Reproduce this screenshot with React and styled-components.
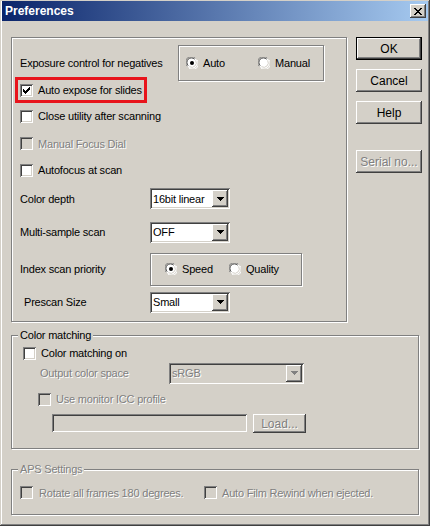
import React from 'react'
import styled, { createGlobalStyle } from 'styled-components'

const Global = createGlobalStyle`
  body {
    margin: 0;
    background: #d4d0c8;
  }
`

const raised = `
  background: #d4d0c8;
  box-shadow: inset -1px -1px #404040, inset 1px 1px #fff, inset -2px -2px #808080, inset 2px 2px #d4d0c8;
`

const sunken = `
  box-shadow: inset 1px 1px #808080, inset -1px -1px #fff, inset 2px 2px #404040, inset -2px -2px #d4d0c8;
`

const Window = styled.div`
  width: 430px;
  height: 526px;
  box-sizing: border-box;
  padding: 1px 2px 0;
  background: #d4d0c8;
  box-shadow: inset -1px -1px #404040, inset 1px 1px #d4d0c8, inset -2px -2px #808080, inset 2px 2px #fff;
  display: flex;
  flex-direction: column;
  font-family: "Liberation Sans", Arial, sans-serif;
  font-size: 11px;
  letter-spacing: -0.2px;
  color: #000;
`

const TitleBar = styled.div`
  height: 20px;
  display: flex;
  align-items: center;
  justify-content: space-between;
  padding: 0 2px 0 3px;
  background: linear-gradient(to right, #0a246a, #a6caf0);
`

const Title = styled.span`
  color: #fff;
  font-weight: bold;
  font-size: 12px;
  letter-spacing: 0;
`

const CloseButton = styled.div`
  width: 16px;
  height: 14px;
  ${raised}
  display: flex;
  align-items: center;
  justify-content: center;
`

const Content = styled.div`
  padding: 16px 0 0 9px;
  display: flex;
  flex-direction: column;
`

const TopRow = styled.div`
  display: flex;
  gap: 9px;
`

const etched = `
  border: 1px solid #808080;
  box-shadow: inset 1px 1px #fff, 1px 1px #fff;
`

const Panel = styled.div`
  ${etched}
  box-sizing: border-box;
  width: 336px;
  height: 285px;
  padding: 7px 0 0 8px;
  display: flex;
  flex-direction: column;
`

const Row = styled.div`
  display: flex;
  align-items: ${p => (p.$top ? 'flex-start' : 'center')};
  height: ${p => p.$h}px;
  margin-top: ${p => p.$mt || 0}px;
  padding-left: ${p => p.$pl || 0}px;
  box-sizing: border-box;
`

const Label = styled.span`
  width: ${p => (p.$w ? `${p.$w}px` : 'auto')};
  padding-left: ${p => p.$pl || 0}px;
  box-sizing: border-box;
  white-space: nowrap;
  color: ${p => (p.$disabled ? '#808080' : '#000')};
  text-shadow: ${p => (p.$disabled ? '1px 1px #fff' : 'none')};
`

const Highlight = styled.div`
  display: flex;
  align-items: center;
  box-sizing: border-box;
  width: 132px;
  height: 26px;
  margin-left: -5px;
  padding-left: 2px;
  border: 3px solid #e8141c;
`

const Option = styled.label`
  display: flex;
  align-items: center;
  gap: ${p => p.$gap || 5}px;
  width: ${p => (p.$w ? `${p.$w}px` : 'auto')};
  flex-shrink: 0;
`

const Box = styled.span`
  width: 13px;
  height: 13px;
  flex-shrink: 0;
  background: ${p => (p.$disabled ? '#d4d0c8' : '#fff')};
  ${sunken}
  display: flex;
  align-items: center;
  justify-content: center;
`

const RadioGroup = styled.div`
  ${etched}
  box-sizing: border-box;
  width: ${p => p.$w}px;
  height: ${p => p.$h}px;
  display: flex;
  align-items: center;
  padding-left: ${p => p.$pl}px;
`

const RadioCircle = styled.span`
  width: 12px;
  height: 12px;
  flex-shrink: 0;
  display: block;
`

const Combo = styled.div`
  width: ${p => p.$w}px;
  height: 21px;
  box-sizing: border-box;
  background: ${p => (p.$disabled ? '#d4d0c8' : '#fff')};
  ${sunken}
  display: flex;
  align-items: center;
  justify-content: space-between;
  padding: 2px 2px 2px 3px;
  color: ${p => (p.$disabled ? '#808080' : '#000')};
`

const ComboButton = styled.span`
  width: 16px;
  height: 17px;
  ${raised}
  display: flex;
  align-items: center;
  justify-content: center;
`

const ButtonColumn = styled.div`
  width: 66px;
  display: flex;
  flex-direction: column;
`

const Button = styled.div`
  width: ${p => p.$w || 66}px;
  height: ${p => p.$h || 23}px;
  margin-top: ${p => p.$mt || 0}px;
  margin-left: ${p => p.$ml || 0}px;
  box-sizing: border-box;
  display: flex;
  align-items: center;
  justify-content: center;
  ${raised}
  ${p => p.$default && `
    border: 1px solid #000;
    box-shadow: inset -1px -1px #404040, inset 1px 1px #fff, inset -2px -2px #808080;
  `}
  color: ${p => (p.$disabled ? '#808080' : '#000')};
  text-shadow: ${p => (p.$disabled ? '1px 1px #fff' : 'none')};
  font-size: 12px;
  letter-spacing: 0;
`

const Group = styled.div`
  position: relative;
  ${etched}
  box-sizing: border-box;
  width: 408px;
  height: ${p => p.$h}px;
  margin-top: ${p => p.$mt}px;
  padding-top: ${p => p.$pt}px;
  display: flex;
  flex-direction: column;
`

const Legend = styled.span`
  position: absolute;
  top: -7px;
  left: 6px;
  padding: 0 2px;
  line-height: 13px;
  background: #d4d0c8;
  color: ${p => (p.$disabled ? '#808080' : '#000')};
  text-shadow: ${p => (p.$disabled ? '1px 1px #fff' : 'none')};
`

const TextField = styled.div`
  width: ${p => p.$w}px;
  height: 18px;
  box-sizing: border-box;
  background: #d4d0c8;
  ${sunken}
`

const Check = () => (
  <svg width="7" height="7" viewBox="0 0 7 7" shapeRendering="crispEdges">
    <path d="M6 0h1v3h-1zM5 1h1v3h-1zM4 2h1v3h-1zM3 3h1v3h-1zM2 4h1v3h-1zM1 3h1v3h-1zM0 2h1v3h-1z" fill="#000" />
  </svg>
)

const CheckBox = ({ checked, disabled, children, w, gap }) => (
  <Option $w={w} $gap={gap}>
    <Box $disabled={disabled}>{checked && <Check />}</Box>
    <Label $disabled={disabled}>{children}</Label>
  </Option>
)

const Radio = ({ checked, children }) => (
  <Option $gap={5}>
    <RadioCircle>
      <svg width="12" height="12" viewBox="0 0 12 12">
        <circle cx="6" cy="6" r="5.5" fill="#fff" />
        <path d="M1.2 9.2 A5.5 5.5 0 0 1 9.2 1.2" stroke="#808080" strokeWidth="1" fill="none" />
        <path d="M2.2 8.6 A4.5 4.5 0 0 1 8.6 2.2" stroke="#404040" strokeWidth="1" fill="none" />
        <path d="M10.8 2.8 A5.5 5.5 0 0 1 2.8 10.8" stroke="#fff" strokeWidth="1" fill="none" />
        <path d="M9.6 3.4 A4.5 4.5 0 0 1 3.4 9.6" stroke="#d4d0c8" strokeWidth="1" fill="none" />
        {checked && <circle cx="6" cy="6" r="2" fill="#000" />}
      </svg>
    </RadioCircle>
    <Label>{children}</Label>
  </Option>
)

const Arrow = ({ disabled }) => (
  <svg width="7" height="4" viewBox="0 0 7 4" shapeRendering="crispEdges">
    <path d="M0 0h7v1h-7zM1 1h5v1h-5zM2 2h3v1h-3zM3 3h1v1h-1z" fill={disabled ? '#808080' : '#000'} />
  </svg>
)

const Select = ({ value, w, disabled }) => (
  <Combo $w={w} $disabled={disabled}>
    <Label $disabled={disabled}>{value}</Label>
    <ComboButton>
      <Arrow disabled={disabled} />
    </ComboButton>
  </Combo>
)

export default function App() {
  return (
    <Window>
      <Global />
      <TitleBar>
        <Title>Preferences</Title>
        <CloseButton>
          <svg width="8" height="7" viewBox="0 0 8 7" shapeRendering="crispEdges">
            <path d="M0 0h2v1h-2zM6 0h2v1h-2zM1 1h2v1h-2zM5 1h2v1h-2zM2 2h4v1h-4zM3 3h2v1h-2zM2 4h4v1h-4zM1 5h2v1h-2zM5 5h2v1h-2zM0 6h2v1h-2zM6 6h2v1h-2z" fill="#000" />
          </svg>
        </CloseButton>
      </TitleBar>
      <Content>
        <TopRow>
          <Panel>
            <Row $h={36}>
              <Label $w={158}>Exposure control for negatives</Label>
              <RadioGroup $w={146} $h={36} $pl={7}>
                <Option $w={72}>
                  <Radio checked>Auto</Radio>
                </Option>
                <Radio>Manual</Radio>
              </RadioGroup>
            </Row>
            <Row $h={26} $mt={-4}>
              <Highlight>
                <CheckBox checked>Auto expose for slides</CheckBox>
              </Highlight>
            </Row>
            <Row $h={26}>
              <CheckBox>Close utility after scanning</CheckBox>
            </Row>
            <Row $h={29}>
              <CheckBox disabled>Manual Focus Dial</CheckBox>
            </Row>
            <Row $h={24}>
              <CheckBox>Autofocus at scan</CheckBox>
            </Row>
            <Row $h={33}>
              <Label $w={130}>Color depth</Label>
              <Select value="16bit linear" w={80} />
            </Row>
            <Row $h={34}>
              <Label $w={130}>Multi-sample scan</Label>
              <Select value="OFF" w={80} />
            </Row>
            <Row $h={40}>
              <Label $w={130}>Index scan priority</Label>
              <RadioGroup $w={152} $h={33} $pl={14}>
                <Option $w={64}>
                  <Radio checked>Speed</Radio>
                </Option>
                <Radio>Quality</Radio>
              </RadioGroup>
            </Row>
            <Row $h={26}>
              <Label $w={130} $pl={4}>Prescan Size</Label>
              <Select value="Small" w={80} />
            </Row>
          </Panel>
          <ButtonColumn>
            <Button $default>OK</Button>
            <Button $mt={9}>Cancel</Button>
            <Button $mt={9}>Help</Button>
            <Button $mt={26} $disabled>Serial no...</Button>
          </ButtonColumn>
        </TopRow>

        <Group $h={114} $mt={13} $pt={8}>
          <Legend>Color matching</Legend>
          <Row $h={18} $pl={11}>
            <CheckBox>Color matching on</CheckBox>
          </Row>
          <Row $h={22} $pl={28}>
            <Label $w={129} $disabled>Output color space</Label>
            <Select value="sRGB" w={135} disabled />
          </Row>
          <Row $h={30} $pl={26}>
            <CheckBox disabled>Use monitor ICC profile</CheckBox>
          </Row>
          <Row $h={20} $pl={40} $top>
            <TextField $w={195} />
            <Button $w={53} $h={19} $ml={6} $disabled>Load...</Button>
          </Row>
        </Group>

        <Group $h={46} $mt={20} $pt={14}>
          <Legend $disabled>APS Settings</Legend>
          <Row $h={17} $pl={8}>
            <CheckBox disabled w={184} gap={6}>Rotate all frames 180 degrees.</CheckBox>
            <CheckBox disabled gap={5}>Auto Film Rewind when ejected.</CheckBox>
          </Row>
        </Group>
      </Content>
    </Window>
  )
}
